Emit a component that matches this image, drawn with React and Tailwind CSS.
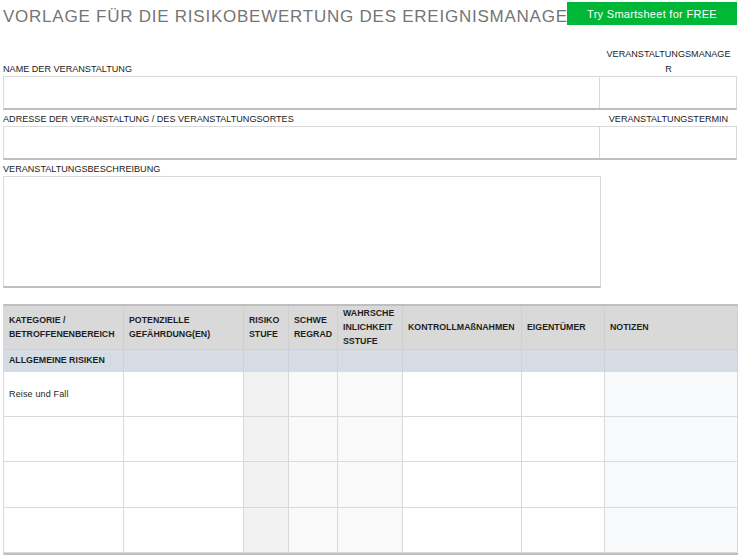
const font = { fontFamily: '"Liberation Sans", Arial, sans-serif' };

const columns = "grid grid-cols-[120px_120px_45px_49px_65px_119px_83px_133px]";

const headers = [
  ["KATEGORIE /", "BETROFFENENBEREICH"],
  ["POTENZIELLE", "GEFÄHRDUNG(EN)"],
  ["RISIKO", "STUFE"],
  ["SCHWE", "REGRAD"],
  ["WAHRSCHE", "INLICHKEIT", "SSTUFE"],
  ["KONTROLLMAßNAHMEN"],
  ["EIGENTÜMER"],
  ["NOTIZEN"],
];

const cellColors = [
  "bg-white",
  "bg-white",
  "bg-[#f2f2f2]",
  "bg-[#f9f9f9]",
  "bg-[#f9f9f9]",
  "bg-white",
  "bg-white",
  "bg-[#f8f9fb]",
];

const rows = [
  { text: "Reise und Fall", height: "h-[45px]" },
  { text: "", height: "h-[45px]" },
  { text: "", height: "h-[46px]" },
  { text: "", height: "h-[45px]" },
];

function Label({ children, className = "" }) {
  return (
    <div className={`pt-[1px] pb-[0px] text-[9.1px] leading-[14px] text-[#1a1a1a] ${className}`}>
      {children}
    </div>
  );
}

function Box({ second, height = "h-[34px]" }) {
  return (
    <div className={`flex ${height} border-x border-t border-b-2 border-[#d9d9d9] border-b-[#bfbfbf] bg-white`}>
      <div className="flex-1" />
      {second && <div className="w-[137px] border-l border-[#d9d9d9]" />}
    </div>
  );
}

function RiskTable() {
  return (
    <div className="mt-[16px] w-[735px] border-t-2 border-l border-[#bfbfbf] border-l-[#d9d9d9] text-[9px] text-[#1f1f1f]">
      <div className={`${columns} h-[43px] bg-[#d9d9d9] text-[8.8px] font-bold`}>
        {headers.map((lines, i) => (
          <div key={i} className="flex flex-col justify-center border-r border-[#cfcfcf] pb-[2px] pl-[5px] leading-[14px]">
            {lines.map((line) => (
              <span key={line} className="whitespace-nowrap">{line}</span>
            ))}
          </div>
        ))}
      </div>
      <div className={`${columns} h-[23px] border-t border-[#cfcfcf] bg-[#d6dce4] text-[8.8px] font-bold`}>
        {headers.map((_, i) => (
          <div key={i} className="flex items-center border-r border-[#cdd2d9] pl-[5px] whitespace-nowrap">
            {i === 0 ? "ALLGEMEINE RISIKEN" : ""}
          </div>
        ))}
      </div>
      {rows.map((row, r) => (
        <div key={r} className={`${columns} ${row.height} border-b border-[#d9d9d9]`}>
          {cellColors.map((color, i) => (
            <div key={i} className={`flex items-center border-r border-[#d9d9d9] pt-[2px] pl-[5px] tracking-[0.15px] ${color}`}>
              {i === 0 ? row.text : ""}
            </div>
          ))}
        </div>
      ))}
      <div className="h-[2px] bg-[#bfbfbf]" />
    </div>
  );
}

export default function App() {
  return (
    <div className="relative h-[557px] w-[740px] overflow-hidden bg-white pl-[3px]" style={font}>
      <a className="absolute top-[2px] left-[567px] flex h-[23px] w-[170px] items-center justify-center bg-[#00b738] pt-[1px] text-[11px] tracking-[0.3px] text-white">
        Try Smartsheet for FREE
      </a>
      <h1 className="h-[46px] w-[564px] overflow-hidden pt-[6px] text-[17px] leading-[22px] font-normal tracking-[0.76px] whitespace-nowrap text-[#757575]">
        VORLAGE FÜR DIE RISIKOBEWERTUNG DES EREIGNISMANAGEMENTS
      </h1>
      <div className="flex w-[734px] items-end">
        <Label className="flex-1">NAME DER VERANSTALTUNG</Label>
        <Label className="w-[137px] text-center">
          <div className="leading-[15px]">VERANSTALTUNGSMANAGE</div>
          <div>R</div>
        </Label>
      </div>
      <div className="w-[734px]">
        <Box second />
      </div>
      <div className="mt-[1px] flex w-[734px] items-end">
        <Label className="flex-1">ADRESSE DER VERANSTALTUNG / DES VERANSTALTUNGSORTES</Label>
        <Label className="w-[137px] text-center">VERANSTALTUNGSTERMIN</Label>
      </div>
      <div className="w-[734px]">
        <Box second />
      </div>
      <div className="mt-[1px]">
        <Label>VERANSTALTUNGSBESCHREIBUNG</Label>
      </div>
      <div className="w-[598px]">
        <Box height="h-[112px]" />
      </div>
      <RiskTable />
    </div>
  );
}
